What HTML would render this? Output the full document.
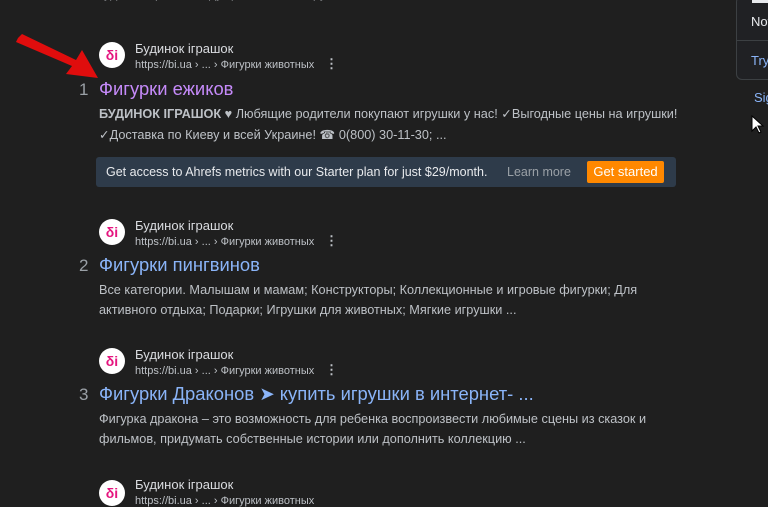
<!DOCTYPE html>
<html><head><meta charset="utf-8"><style>
*{margin:0;padding:0;box-sizing:border-box}
body{width:768px;height:505px;overflow:hidden;background:#1f1f1f;font-family:"Liberation Sans",Arial,sans-serif;position:relative;color:#bdc1c6}
.a{position:absolute;white-space:nowrap}
.fav{position:absolute;width:26px;height:26px;border-radius:50%;background:#fff;color:#e5157f;font-weight:bold;font-size:14px;text-align:center;line-height:26px;left:99px}
.site{font-size:13px;color:#dadce0;left:135px}
.url{font-size:11px;color:#bdc1c6;left:135px}
.dots{font-size:13px;color:#bdc1c6;font-weight:bold}
.num{font-size:17px;color:#9aa0a6;left:79px}
.t{font-size:18.4px;color:#8ab4f8;left:99px}
.s{font-size:12.7px;color:#bdc1c6;left:99px}
</style></head><body>
<div class="a s" style="top:-13px;left:96px;color:#bdc1c6">Будинок іграшок ведущий магазин игрушек</div>
<svg class="a" style="left:14px;top:34px" width="90" height="50"><polygon points="4,4 8,0 62,26 68,16 84,44 52,40 58,32 2,8" fill="#e00d0d"/></svg>

<div class="fav" style="top:42px">δi</div>
<div class="a site" style="top:41px">Будинок іграшок</div>
<div class="a url" style="top:59px">https://bi.ua › ... › Фигурки животных</div>
<div class="a dots" style="left:325px;top:56px">⋮</div>
<div class="a num" style="top:80px">1</div>
<div class="a t" style="top:78px;color:#c58af9">Фигурки ежиков</div>
<div class="a s" style="top:106px"><b>БУДИНОК ІГРАШОК</b> ♥ Любящие родители покупают игрушки у нас! ✓Выгодные цены на игрушки!</div>
<div class="a s" style="top:127px">✓Доставка по Киеву и всей Украине! ☎ 0(800) 30-11-30; ...</div>
<div class="a" style="left:96px;top:157px;width:580px;height:30px;background:#2e3b4a;border-radius:3px">
<div class="a" style="left:10px;top:8px;font-size:12.5px;color:#e8eaed">Get access to Ahrefs metrics with our Starter plan for just $29/month.</div>
<div class="a" style="left:411px;top:8px;font-size:12.5px;color:#9aa0a6">Learn more</div>
<div class="a" style="left:491px;top:4px;width:77px;height:22px;background:#ff8800;border-radius:2px;color:#fff;font-size:13px;text-align:center;line-height:22px">Get started</div>
</div>

<div class="fav" style="top:219px">δi</div>
<div class="a site" style="top:218px">Будинок іграшок</div>
<div class="a url" style="top:236px">https://bi.ua › ... › Фигурки животных</div>
<div class="a dots" style="left:325px;top:233px">⋮</div>
<div class="a num" style="top:256px">2</div>
<div class="a t" style="top:254px">Фигурки пингвинов</div>
<div class="a s" style="top:283px">Все категории. Малышам и мамам; Конструкторы; Коллекционные и игровые фигурки; Для</div>
<div class="a s" style="top:303px">активного отдыха; Подарки; Игрушки для животных; Мягкие игрушки ...</div>

<div class="fav" style="top:348px">δi</div>
<div class="a site" style="top:347px">Будинок іграшок</div>
<div class="a url" style="top:365px">https://bi.ua › ... › Фигурки животных</div>
<div class="a dots" style="left:325px;top:362px">⋮</div>
<div class="a num" style="top:385px">3</div>
<div class="a t" style="top:383px">Фигурки Драконов ➤ купить игрушки в интернет- ...</div>
<div class="a s" style="top:412px">Фигурка дракона – это возможность для ребенка воспроизвести любимые сцены из сказок и</div>
<div class="a s" style="top:432px">фильмов, придумать собственные истории или дополнить коллекцию ...</div>

<div class="fav" style="top:480px">δi</div>
<div class="a site" style="top:477px">Будинок іграшок</div>
<div class="a url" style="top:495px">https://bi.ua › ... › Фигурки животных</div>

<div class="a" style="left:736px;top:-4px;width:40px;height:84px;border:1px solid #3c4043;border-radius:6px;background:#202124"></div>
<div class="a" style="left:752px;top:0;width:20px;height:3px;background:#e8eaed"></div>
<div class="a" style="left:736px;top:40px;width:32px;height:1px;background:#3c4043"></div>
<div class="a" style="left:751px;top:14px;font-size:13px;color:#e8eaed">Not</div>
<div class="a" style="left:751px;top:53px;font-size:13px;color:#8ab4f8">Try</div>
<div class="a" style="left:754px;top:90px;font-size:13px;color:#8ab4f8">Sig</div>
<svg class="a" style="left:751px;top:115px" width="14" height="20"><polygon points="1,1 1,16 5,12 8,18 10,17 7,11 12,11" fill="#fff" stroke="#000" stroke-width="1"/></svg>
</body></html>
